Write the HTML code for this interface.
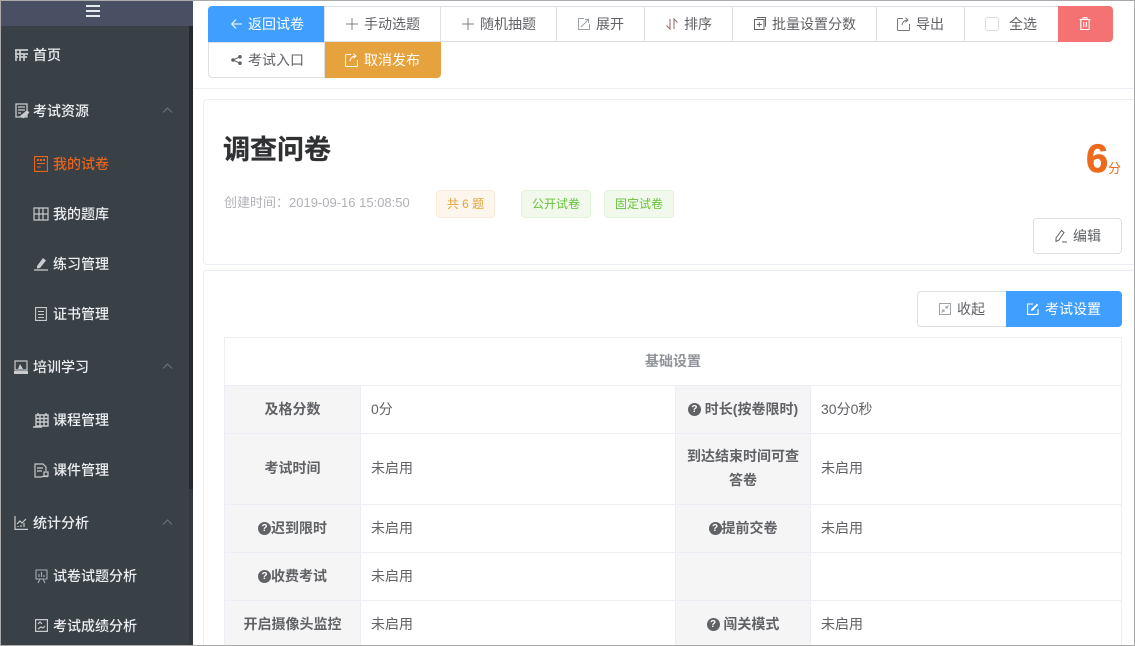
<!DOCTYPE html>
<html lang="zh"><head><meta charset="utf-8"><title>调查问卷</title>
<style>
*{box-sizing:border-box;margin:0;padding:0}
html,body{width:1135px;height:646px;overflow:hidden;background:#fff}
body{position:relative;font-family:"Liberation Sans","Noto Sans CJK SC","WenQuanYi Zen Hei",sans-serif;font-size:14px;color:#606266}
.a{position:absolute}
.t{position:absolute;white-space:nowrap;line-height:20px}
.nav{position:absolute;white-space:nowrap;line-height:20px;color:#eceef0;font-size:14px;font-weight:500}
.ic{position:absolute;overflow:visible;fill:none}
.btn{position:absolute;border:1px solid #dcdfe6;background:#fff;height:36px;margin-right:-1px}
.b{position:absolute;white-space:nowrap;line-height:20px;font-size:14px;color:#606266}
.td{position:absolute;border:1px solid #ebeef5;margin:0}
.lab{background:#f5f5f5;color:#606266;font-weight:700;font-size:14px;text-align:center;display:flex;align-items:center;justify-content:center;line-height:24px;padding-bottom:2px}
.val{display:flex;align-items:center;padding-left:10px;padding-bottom:2px;font-size:14px;line-height:24px;color:#606266;background:#fff}
.q{display:inline-block;width:13px;height:13px;border-radius:50%;background:#606266;color:#fff;font-size:10px;font-weight:700;line-height:13px;text-align:center;vertical-align:2px}
</style></head><body>

<!-- sidebar -->
<div class="a" style="left:0;top:0;width:193px;height:646px;background:#394046"></div>
<div class="a" style="left:0;top:1px;width:193px;height:25px;background:#4a5064"></div>
<div class="a" style="left:189px;top:26px;width:4px;height:620px;background:#33393d"></div>
<div class="a" style="left:189px;top:26px;width:4px;height:463px;background:#25292c"></div>
<div class="a" style="left:86px;top:5px;width:14px;height:2px;background:#e8e9ec"></div>
<div class="a" style="left:86px;top:10px;width:14px;height:2px;background:#e8e9ec"></div>
<div class="a" style="left:86px;top:15px;width:14px;height:2px;background:#e8e9ec"></div>

<svg class="ic" style="left:14px;top:48px" width="15" height="15" viewBox="0 0 15 15" stroke="#c8cacc" stroke-width="1.700"><path d="M1 2h13M1 6h13M2 2v11M6 2v11M6 9h7M10 6v7M2 9h2"/></svg>
<div class="nav" style="left:33px;top:45px">首页</div>

<svg class="ic" style="left:15px;top:103px" width="14" height="15" viewBox="0 0 14 15" stroke="#c8cacc" stroke-width="1.300"><path d="M1 1h11v13H1zM3 4h7M3 7h7M3 10h3"/><path d="M6 13l6-5 1.500 1.500-5 5z" fill="#c8cacc"/></svg>
<div class="nav" style="left:33px;top:101px">考试资源</div>
<svg class="ic" style="left:162px;top:107px" width="11" height="6" viewBox="0 0 11 6" stroke="#6f7579" stroke-width="1"><path d="M1 5.500L5.500 1 10 5.500"/></svg>

<svg class="ic" style="left:34px;top:156px" width="14" height="16" viewBox="0 0 14 16" stroke="#e8641b" stroke-width="1.100"><path d="M.6.600h12.800v14.800H.6zM3 7.500h8M3 11h4"/><path d="M3 4h8" stroke-dasharray="2 1" stroke-width="2"/></svg>
<div class="nav" style="left:53px;top:154px;color:#e8641b">我的试卷</div>

<svg class="ic" style="left:33px;top:207px" width="16" height="14" viewBox="0 0 16 14" stroke="#c8cacc" stroke-width="1.200"><path d="M1 1h14v12H1zM6 1v12M10 1v12M1 7h5M10 7h5M6 7h4"/></svg>
<div class="nav" style="left:53px;top:204px">我的题库</div>

<svg class="ic" style="left:34px;top:257px" width="15" height="14" viewBox="0 0 15 14"><path d="M3 9l6-8 3 2.500-6 7.500-3 .5z" fill="#c8cacc"/><path d="M0 13h14" stroke="#c8cacc" stroke-width="1.300"/></svg>
<div class="nav" style="left:53px;top:254px">练习管理</div>

<svg class="ic" style="left:35px;top:307px" width="12" height="14" viewBox="0 0 12 14" stroke="#c8cacc" stroke-width="1.100"><path d="M.6.600h10.800v12.800H.6zM3 4.500h6M3 7.500h6M3 10.500h6"/></svg>
<div class="nav" style="left:53px;top:304px">证书管理</div>

<svg class="ic" style="left:14px;top:360px" width="14" height="14" viewBox="0 0 14 14" stroke="#c8cacc" stroke-width="1.200"><path d="M1 1h12v9H1z"/><path d="M0 11h14v3H0z" fill="#c8cacc" stroke="none"/><path d="M4 9l2-5 3 5z" fill="#c8cacc" stroke="none"/></svg>
<div class="nav" style="left:33px;top:357px">培训学习</div>
<svg class="ic" style="left:162px;top:363px" width="11" height="6" viewBox="0 0 11 6" stroke="#6f7579" stroke-width="1"><path d="M1 5.500L5.500 1 10 5.500"/></svg>

<svg class="ic" style="left:33px;top:412px" width="16" height="16" viewBox="0 0 16 16" stroke="#c8cacc" stroke-width="1.400"><path d="M3 3h12v11H3zM3 6.500h12M3 10h12M7 3v11M11 3v11M5 1v3M13 1v3M0 15h9"/></svg>
<div class="nav" style="left:53px;top:410px">课程管理</div>

<svg class="ic" style="left:34px;top:463px" width="15" height="15" viewBox="0 0 15 15" stroke="#c8cacc" stroke-width="1.200"><path d="M8 14H1V1h8l3 3v4M3 5h6M3 8h5"/><path d="M10 9h4v4h-4zM8 13.500h6"/></svg>
<div class="nav" style="left:53px;top:460px">课件管理</div>

<svg class="ic" style="left:14px;top:516px" width="14" height="14" viewBox="0 0 14 14" stroke="#c8cacc" stroke-width="1.200"><path d="M1 0v13.400h13M3 8l3-3 2 2 4-4M4 11v-1M7 11V9M10 11V7"/></svg>
<div class="nav" style="left:33px;top:513px">统计分析</div>
<svg class="ic" style="left:162px;top:519px" width="11" height="6" viewBox="0 0 11 6" stroke="#6f7579" stroke-width="1"><path d="M1 5.500L5.500 1 10 5.500"/></svg>

<svg class="ic" style="left:35px;top:569px" width="13" height="15" viewBox="0 0 13 15" stroke="#a9acae" stroke-width="1.100"><path d="M1 1h11v9H1zM4 8V5M6.500 8V3M9 8V6M3 14l2-4M10 14l-2-4"/></svg>
<div class="nav" style="left:53px;top:566px">试卷试题分析</div>

<svg class="ic" style="left:35px;top:619px" width="13" height="13" viewBox="0 0 13 13" stroke="#c8cacc" stroke-width="1.200"><path d="M.6.600h11.800v11.800H.6zM3 5l2-2 2 2M3 10l3-2 2 1 2-2"/></svg>
<div class="nav" style="left:53px;top:616px">考试成绩分析</div>

<!-- action buttons -->
<div class="a" style="left:208px;top:6px;width:117px;height:36px;background:#409eff;border-radius:4px 0 0 0"></div>
<svg class="ic" style="left:231px;top:19px" width="11" height="10" viewBox="0 0 11 10" stroke="#fff" stroke-width="1.100"><path d="M5 .5L.8 5 5 9.500M1 5h10"/></svg>
<div class="b" style="left:248px;top:14px;color:#fff">返回试卷</div>

<div class="btn" style="left:324px;top:6px;width:117px"></div>
<svg class="ic" style="left:346px;top:18px" width="12" height="12" viewBox="0 0 12 12" stroke="#7c7f85" stroke-width="1"><path d="M6 0v12M0 6h12"/></svg>
<div class="b" style="left:364px;top:14px">手动选题</div>

<div class="btn" style="left:440px;top:6px;width:117px"></div>
<svg class="ic" style="left:462px;top:18px" width="12" height="12" viewBox="0 0 12 12" stroke="#7c7f85" stroke-width="1"><path d="M6 0v12M0 6h12"/></svg>
<div class="b" style="left:480px;top:14px">随机抽题</div>

<div class="btn" style="left:556px;top:6px;width:89px"></div>
<svg class="ic" style="left:578px;top:18px" width="12" height="12" viewBox="0 0 12 12" stroke="#a0a3a8" stroke-width="1"><path d="M6 .5H.5v11h11V6M3 9l7-7M7 1.500h3.500V5"/></svg>
<div class="b" style="left:596px;top:14px">展开</div>

<div class="btn" style="left:644px;top:6px;width:89px"></div>
<svg class="ic" style="left:666px;top:18px" width="12" height="12" viewBox="0 0 12 12" stroke="#8a6a66" stroke-width="1"><path d="M4 1v10L.5 7.500M8 11V1l3.500 3.500"/></svg>
<div class="b" style="left:684px;top:14px">排序</div>

<div class="btn" style="left:732px;top:6px;width:145px"></div>
<svg class="ic" style="left:754px;top:17px" width="12" height="13" viewBox="0 0 12 13" stroke="#606266" stroke-width="1"><path d="M.5 2.500h9.500v10H.5zM3 .5h8.500v9M5.200 5v5M2.800 7.500h5"/></svg>
<div class="b" style="left:772px;top:14px">批量设置分数</div>

<div class="btn" style="left:876px;top:6px;width:89px"></div>
<svg class="ic" style="left:897px;top:17px" width="14" height="14" viewBox="0 0 14 14" stroke="#73767b" stroke-width="1"><path d="M6 1.500H1.500a1 1 0 0 0-1 1v10a1 1 0 0 0 1 1h10a1 1 0 0 0 1-1V7M5 8c.5-3 2-4.500 5-5M8.500.8L11 3 8.500 5.200"/></svg>
<div class="b" style="left:916px;top:14px">导出</div>

<div class="btn" style="left:964px;top:6px;width:94px;border-right:0"></div>
<div class="a" style="left:985px;top:17px;width:14px;height:14px;border:1px solid #dcdfe6;border-radius:2px;background:#fff"></div>
<div class="b" style="left:1009px;top:14px">全选</div>

<div class="a" style="left:1058px;top:6px;width:55px;height:36px;background:#f56c6c;opacity:.96;border-radius:0 4px 4px 0"></div>
<svg class="ic" style="left:1079px;top:17px" width="12" height="13" viewBox="0 0 12 13" stroke="#fff" stroke-width="1.100"><path d="M.5 2.500h11M4 2.500V.8h4v1.700M1.800 2.500v10h8.400v-10M4.700 5v5M7.300 5v5"/></svg>

<div class="btn" style="left:208px;top:42px;width:117px;border-radius:0 0 0 4px"></div>
<svg class="ic" style="left:231px;top:55px" width="11" height="10" viewBox="0 0 11 10" fill="#606266"><circle cx="2" cy="5" r="1.800" fill="#606266"/><circle cx="9" cy="1.800" r="1.800" fill="#606266"/><circle cx="9" cy="8.200" r="1.800" fill="#606266"/><path d="M2 5l7-3.200M2 5l7 3.200" stroke="#606266"/></svg>
<div class="b" style="left:248px;top:50px">考试入口</div>

<div class="a" style="left:325px;top:42px;width:116px;height:36px;background:#e6a23c;border-radius:0 0 4px 0"></div>
<svg class="ic" style="left:345px;top:53px" width="14" height="14" viewBox="0 0 14 14" stroke="#fff" stroke-width="1"><path d="M6 1.500H1.500a1 1 0 0 0-1 1v10a1 1 0 0 0 1 1h10a1 1 0 0 0 1-1V7M5 8c.5-3 2-4.500 5-5M8.500.8L11 3 8.500 5.200"/></svg>
<div class="b" style="left:364px;top:50px;color:#fff">取消发布</div>

<!-- separators / cards -->
<div class="a" style="left:193px;top:88px;width:941px;height:1px;background:#ebeef5"></div>
<div class="a" style="left:203px;top:99px;width:932px;height:166px;border:1px solid #ebeef5;border-radius:4px 0 0 4px"></div>
<div class="a" style="left:203px;top:270px;width:932px;height:380px;border:1px solid #ebeef5;border-radius:4px 0 0 0"></div>

<div class="t" style="left:223px;top:130px;font-size:27px;line-height:40px;font-weight:700;color:#303133;-webkit-text-stroke:.3px #303133">调查问卷</div>
<div class="t" style="left:224px;top:193px;font-size:13px;color:#b0b2b6">创建时间：<span style="font-weight:500">2019-09-16 15:08:50</span></div>

<div class="a" style="left:436px;top:190px;width:59px;height:28px;background:#fdf6ec;border:1px solid #faecd8;border-radius:4px;color:#e6a23c;font-size:12px;text-align:center;line-height:26px">共 6 题</div>
<div class="a" style="left:521px;top:190px;width:70px;height:28px;background:#f0f9eb;border:1px solid #e1f3d8;border-radius:4px;color:#67c23a;font-size:12px;text-align:center;line-height:26px">公开试卷</div>
<div class="a" style="left:604px;top:190px;width:70px;height:28px;background:#f0f9eb;border:1px solid #e1f3d8;border-radius:4px;color:#67c23a;font-size:12px;text-align:center;line-height:26px">固定试卷</div>

<div class="t" style="left:1086px;top:136px;font-size:40px;line-height:46px;font-weight:700;color:#ec6a1d;-webkit-text-stroke:.6px #ec6a1d">6</div>
<div class="t" style="left:1108px;top:159px;font-size:13px;color:#ec6a1d">分</div>

<div class="a" style="left:1033px;top:218px;width:89px;height:36px;border:1px solid #dcdfe6;border-radius:4px;background:#fff"></div>
<svg class="ic" style="left:1055px;top:229px" width="13" height="14" viewBox="0 0 13 14" stroke="#606266" stroke-width="1"><path d="M1 9L6.500 1.500l2.500 2L4 11l-3 1.500zM7 13h5"/></svg>
<div class="b" style="left:1073px;top:226px">编辑</div>

<div class="a" style="left:917px;top:291px;width:90px;height:36px;border:1px solid #dcdfe6;border-radius:4px 0 0 4px;background:#fff"></div>
<svg class="ic" style="left:939px;top:303px" width="12" height="12" viewBox="0 0 12 12" stroke="#a0a3a8" stroke-width="1"><path d="M.5.500h11v11H.5zM2.500 9.500L5 7M5 9V7H3M9.500 2.500L7 5M7 3v2h2"/></svg>
<div class="b" style="left:957px;top:299px">收起</div>
<div class="a" style="left:1006px;top:291px;width:116px;height:36px;background:#409eff;border-radius:0 4px 4px 0"></div>
<svg class="ic" style="left:1027px;top:303px" width="12" height="12" viewBox="0 0 12 12" stroke="#fff" stroke-width="1.100"><path d="M6 1H.6v10.400H11V6"/><path d="M4 8l.4-2L10 .8l1.200 1.200L6 7.500z" fill="#fff" stroke="none"/></svg>
<div class="b" style="left:1045px;top:299px;color:#fff">考试设置</div>

<!-- table -->
<div class="td" style="left:224px;top:337px;width:898px;height:49px;display:flex;align-items:center;justify-content:center;font-size:14px;line-height:24px;padding-bottom:2px;font-weight:700;color:#909399">基础设置</div>

<div class="td lab" style="left:224px;top:385px;width:137px;height:49px">及格分数</div>
<div class="td val" style="left:360px;top:385px;width:316px;height:49px">0分</div>
<div class="td lab" style="left:675px;top:385px;width:136px;height:49px"><span><span class="q">?</span> 时长(按卷限时)</span></div>
<div class="td val" style="left:810px;top:385px;width:312px;height:49px">30分0秒</div>

<div class="td lab" style="left:224px;top:433px;width:137px;height:72px">考试时间</div>
<div class="td val" style="left:360px;top:433px;width:316px;height:72px">未启用</div>
<div class="td lab" style="left:675px;top:433px;width:136px;height:72px">到达结束时间可查<br>答卷</div>
<div class="td val" style="left:810px;top:433px;width:312px;height:72px">未启用</div>

<div class="td lab" style="left:224px;top:504px;width:137px;height:49px"><span><span class="q">?</span>迟到限时</span></div>
<div class="td val" style="left:360px;top:504px;width:316px;height:49px">未启用</div>
<div class="td lab" style="left:675px;top:504px;width:136px;height:49px"><span><span class="q">?</span>提前交卷</span></div>
<div class="td val" style="left:810px;top:504px;width:312px;height:49px">未启用</div>

<div class="td lab" style="left:224px;top:552px;width:137px;height:49px"><span><span class="q">?</span>收费考试</span></div>
<div class="td val" style="left:360px;top:552px;width:316px;height:49px">未启用</div>
<div class="td lab" style="left:675px;top:552px;width:136px;height:49px"></div>
<div class="td val" style="left:810px;top:552px;width:312px;height:49px"></div>

<div class="td lab" style="left:224px;top:600px;width:137px;height:49px">开启摄像头监控</div>
<div class="td val" style="left:360px;top:600px;width:316px;height:49px">未启用</div>
<div class="td lab" style="left:675px;top:600px;width:136px;height:50px"><span><span class="q">?</span> 闯关模式</span></div>
<div class="td val" style="left:810px;top:600px;width:312px;height:49px">未启用</div>

<!-- window frame -->
<div class="a" style="left:0;top:0;width:1135px;height:646px;border:1px solid #aaa;pointer-events:none"></div>
</body></html>
